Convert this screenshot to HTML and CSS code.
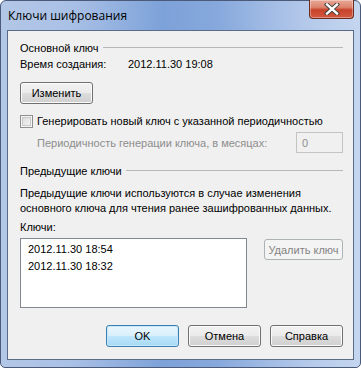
FILE: index.html
```html
<!DOCTYPE html>
<html lang="ru">
<head>
    <meta charset="UTF-8">
    <title>Ключи шифрования</title>
    <link rel="stylesheet" href="styles.css">
</head>
<body>
    <div class="window">
        <div class="titlebar">
            <span class="title">Ключи шифрования</span>
            <div class="close-btn">
                <svg width="16" height="12" viewBox="0 0 16 12">
                    <path d="M3 1.5 L13 10.5 M13 1.5 L3 10.5" stroke="#3a3a3a" stroke-width="4.2" stroke-linecap="square"/>
                    <path d="M3 1.5 L13 10.5 M13 1.5 L3 10.5" stroke="#ffffff" stroke-width="2.4" stroke-linecap="square"/>
                </svg>
            </div>
        </div>

        <div class="client">
            <div class="group-head">Основной ключ</div>
            <div class="row created">
                <span class="label">Время создания:</span>
                <span class="value">2012.11.30 19:08</span>
            </div>
            <div class="btn change-btn">Изменить</div>

            <div class="row check-row">
                <span class="checkbox"></span>
                <span>Генерировать новый ключ с указанной периодичностью</span>
            </div>
            <div class="row period-row">
                <span class="disabled-text">Периодичность генерации ключа, в месяцах:</span>
                <span class="textbox">0</span>
            </div>

            <div class="group-head second">Предыдущие ключи</div>
            <p class="note">Предыдущие ключи используются в случае изменения<br>основного ключа для чтения ранее зашифрованных данных.</p>
            <div class="keys-label">Ключи:</div>
            <div class="keys-row">
                <div class="listbox">
                    <div class="list-item">2012.11.30 18:54</div>
                    <div class="list-item">2012.11.30 18:32</div>
                </div>
                <div class="btn disabled delete-btn">Удалить ключ</div>
            </div>

            <div class="footer">
                <div class="btn default">OK</div>
                <div class="btn">Отмена</div>
                <div class="btn">Справка</div>
            </div>
        </div>
    </div>
</body>
</html>
```

FILE: styles.css
```css
body {
    margin: 0;
    padding: 0;
    background: #ffffff;
    font-family: 'Liberation Sans', Arial, sans-serif;
    font-size: 11px;
    color: #000;
}

.window {
    width: 361px;
    height: 368px;
    box-sizing: border-box;
    border: 1px solid #4a5a78;
    border-radius: 6px 6px 5px 5px;
    background: linear-gradient(90deg, #b3c7e6 0%, #a9c0e6 20%, #7da2d9 45%, #86a8dc 60%, #b4c9ea 85%, #c4d6ef 100%);
    padding: 0 6px 7px 6px;
    display: flex;
    flex-direction: column;
}

.titlebar {
    height: 29px;
    display: flex;
    align-items: flex-start;
    justify-content: space-between;
}

.title {
    font-family: 'Open Sans', 'Noto Sans', sans-serif;
    font-size: 12px;
    margin-top: 6px;
    margin-left: 1px;
    color: #000;
}

.close-btn {
    width: 45px;
    height: 19px;
    box-sizing: border-box;
    margin-top: -1px;
    border: 1px solid #6e2b22;
    border-top: none;
    border-radius: 0 0 4px 4px;
    background: linear-gradient(180deg, #e9a795 0%, #dc8570 40%, #c8432b 55%, #d2593f 100%);
    box-shadow: inset 0 0 0 1px rgba(255, 255, 255, 0.35);
    display: flex;
    align-items: center;
    justify-content: center;
}

.client {
    flex: 1;
    background: #f0f0f0;
    border: 1px solid #5a6b88;
    padding: 0 10px 0 12px;
}

.group-head {
    display: flex;
    align-items: center;
    height: 13px;
    margin-top: 10px;
}

.group-head::after {
    content: "";
    flex: 1;
    height: 1px;
    background: #b8b8b8;
    margin-left: 4px;
}

.group-head.second {
    margin-top: 11px;
}

.row {
    display: flex;
    align-items: center;
}

.created {
    margin-top: 3px;
    height: 13px;
}

.created .label {
    width: 108px;
}

.btn {
    box-sizing: border-box;
    width: 73px;
    height: 22px;
    border: 1px solid #707070;
    border-radius: 3px;
    background: linear-gradient(180deg, #f2f2f2 0%, #ebebeb 48%, #dddddd 52%, #cfcfcf 100%);
    box-shadow: inset 0 0 0 1px #fbfbfb;
    display: flex;
    align-items: center;
    justify-content: center;
}

.change-btn {
    margin-top: 12px;
}

.btn.disabled {
    border-color: #adb2b5;
    background: #f4f4f4;
    box-shadow: none;
    color: #838383;
}

.btn.default {
    border-color: #3c7fb1;
    background: linear-gradient(180deg, #eaf6fd 0%, #d9f0fc 48%, #bee6fd 52%, #a7d9f5 100%);
    box-shadow: inset 0 0 0 1px #c7e8fb;
}

.check-row {
    margin-top: 10px;
    height: 14px;
}

.checkbox {
    box-sizing: border-box;
    width: 13px;
    height: 13px;
    border: 1px solid #8e8f8f;
    background: linear-gradient(135deg, #d9d9d9, #f7f7f7);
    box-shadow: inset 0 0 0 1px #f4f4f4, inset 0 0 0 2px #c9c9c9;
    margin-right: 4px;
}

.period-row {
    margin-top: 4px;
    height: 21px;
    justify-content: space-between;
    padding-left: 17px;
}

.disabled-text {
    color: #8d8d8d;
}

.textbox {
    box-sizing: border-box;
    width: 47px;
    height: 21px;
    border: 1px solid #c4c4c4;
    background: #f0f0f0;
    color: #8d8d8d;
    padding-left: 5px;
    display: flex;
    align-items: center;
}

.note {
    margin: 9px 0 0 0;
    line-height: 15px;
}

.keys-label {
    margin-top: 4px;
    line-height: 15px;
}

.keys-row {
    display: flex;
    justify-content: space-between;
    align-items: flex-start;
    margin-top: 3px;
}

.listbox {
    box-sizing: border-box;
    width: 227px;
    height: 70px;
    border: 1px solid #828790;
    background: #ffffff;
    padding: 2px 0 0 7px;
}

.list-item {
    line-height: 17px;
}

.delete-btn {
    width: 79px;
    height: 21px;
    margin-top: 1px;
}

.footer {
    display: flex;
    justify-content: flex-end;
    gap: 9px;
    margin-top: 17px;
}
```
